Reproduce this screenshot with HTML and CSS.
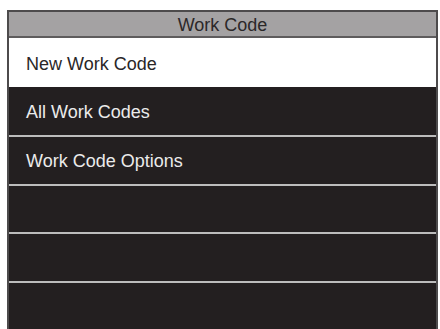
FILE: index.html
```html
<!DOCTYPE html>
<html>

<head>
    <meta charset="UTF-8">
    <meta name="viewport" content="width=device-width, initial-scale=1.0">
    <title>Work Code</title>
    <link rel="stylesheet" href="styles.css">
</head>

<body>
    <div class="screen">
        <div class="title">Work Code</div>
        <div class="menu">
            <div class="item selected">New Work Code</div>
            <div class="item">All Work Codes</div>
            <div class="item sep">Work Code Options</div>
            <div class="item sep"></div>
            <div class="item sep"></div>
            <div class="item sep"></div>
        </div>
    </div>
</body>

</html>
```

FILE: styles.css
```css
body {
    font-family: "Liberation Sans", Arial, sans-serif;
    margin: 0;
    background: #fff;
}
.screen {
    width: 427px;
    margin: 10px 0 0 7px;
    border: 2px solid #4d4b4c;
    border-bottom: none;
    background: #231f20;
}
.title {
    height: 24px;
    line-height: 26px;
    background: #a4a2a3;
    border-bottom: 2px solid #5e5c5d;
    color: #2b2829;
    font-size: 18px;
    text-align: center;
}
.item {
    display: flex;
    align-items: center;
    height: 48px;
    padding: 3px 0 0 17px;
    color: #ebebeb;
    font-size: 18px;
    box-sizing: border-box;
}
.item.selected {
    height: 49px;
    background: #fff;
    color: #2a2728;
}
.item.sep {
    height: 48.5px;
    border-top: 2px solid #bcbcbc;
}
```
